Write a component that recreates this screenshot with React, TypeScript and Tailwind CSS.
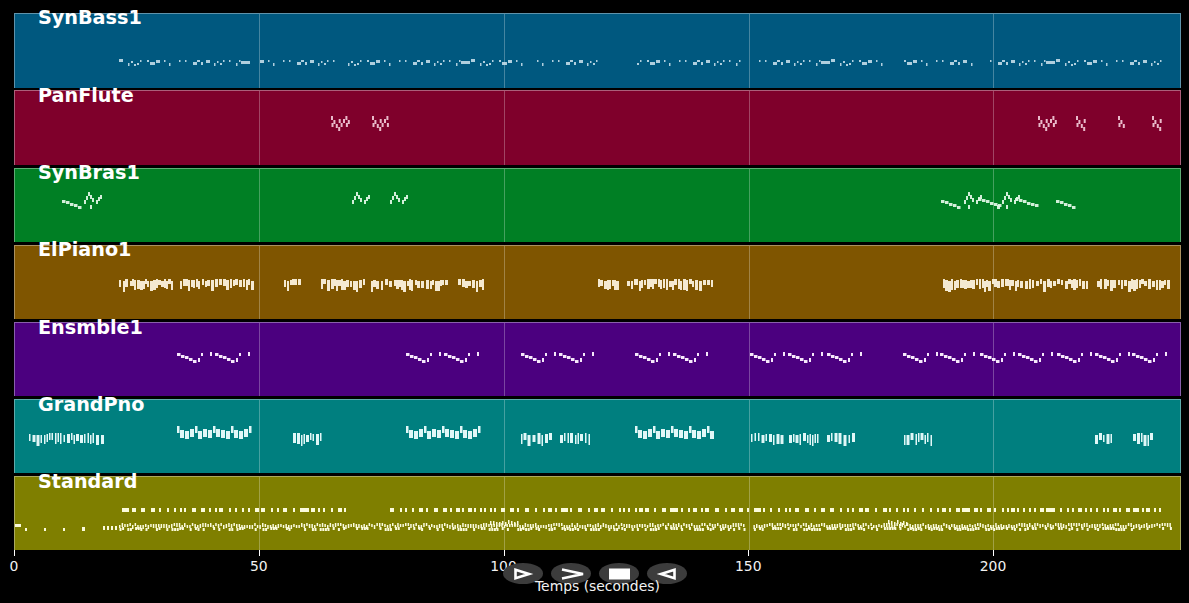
import React from "react";

type R = [number, number, number, number];

function rng(seed: number) {
  let s = seed;
  return () => {
    s = (s * 1664525 + 1013904223) >>> 0;
    return ((s >>> 8) & 0xffff) / 0xffff;
  };
}

const PANEL_TOPS = [13, 90, 168, 245, 322, 399, 476];

const BASS_MOTIF: R[] = [
  [0, 59, 4, 3], [9, 63, 1.5, 3], [12, 61, 2, 2], [15, 64, 2, 2], [18, 63, 2, 2], [21, 60, 1.5, 2],
  [28, 60, 2, 2], [31, 62, 5, 3], [37, 60, 4, 3], [45, 60, 1.5, 2], [50, 63, 1.5, 3], [60, 60, 1.5, 2],
  [66, 60, 1.5, 2], [74, 62, 4, 3], [78, 60, 3, 2], [82, 62, 2, 3], [87, 60, 4, 3], [95, 63, 1.5, 3],
  [98, 61, 1.5, 2], [101, 63, 2, 2], [104, 60, 1.5, 2], [110, 60, 1.5, 2], [117, 63, 1.5, 3], [120, 60, 1.5, 2],
  [122, 61, 5, 3], [127, 61, 4, 3],
];

function synBass(): R[] {
  const out: R[] = [];
  const segs = [[119, 250], [260, 335], [347, 527], [537, 598], [635, 745], [752, 890], [900, 975], [985, 1166]];
  segs.forEach(([a, b], si) => {
    const phase = (si * 37) % 66;
    let base = a - phase;
    while (base < b) {
      for (const m of BASS_MOTIF) {
        const x = base + m[0];
        if (x >= a && x + m[2] <= b) out.push([x, m[1], m[2], m[3]]);
      }
      base += 132;
    }
  });
  return out;
}

function panFlute(): R[] {
  const out: R[] = [];
  const segs = [[331, 349], [372, 387], [1038, 1056], [1076, 1084], [1118, 1123], [1152, 1161]];
  const wave = [0, 4, 8, 11, 7, 3];
  for (const [a, b] of segs) {
    let i = 0;
    for (let x = a; x < b; x += 2.4) {
      const y = 116 + wave[i % 6];
      out.push([x, y, 2, 4]);
      if (i % 3 === 0) out.push([x + 0.5, y > 122 ? y - 8 : y + 7, 2, 4]);
      i++;
    }
  }
  return out;
}

function run(x0: number, y0: number, len: number, h = 3, step = 4): R[] {
  const out: R[] = [];
  const n = Math.round(len / step);
  const slope = 7 / n;
  for (let i = 0; i < n; i++) out.push([x0 + i * step, Math.round(y0 + i * slope), step - 0.5, h]);
  return out;
}

function scatter(x0: number): R[] {
  const pts = [[0, 200], [2, 196], [4, 192], [6, 195], [8, 198], [12, 200], [14, 197], [16, 195]];
  return pts.map(([d, y]) => [x0 + d, y, 2, 4] as R);
}

function synBras(): R[] {
  const out: R[] = [];
  [62, 941, 1056].forEach((x) => out.push(...run(x, 200, 20)));
  [978, 1015].forEach((x) => out.push(...run(x, 198, 22)));
  [84, 352, 390, 964, 1002].forEach((x) => out.push(...scatter(x)));
  out.push([90, 205, 2, 4], [968, 205, 2, 4], [997, 205, 3, 4], [1006, 205, 2, 4]);
  return out;
}

function elPiano(): R[] {
  const r = rng(23);
  const out: R[] = [];
  const segs = [[119, 172], [180, 253], [284, 302], [321, 365], [371, 449], [458, 484], [598, 619], [627, 712], [943, 1087], [1097, 1170]];
  for (const [a, b] of segs) {
    let x = a;
    while (x < b) {
      const w = r() < 0.45 ? 3 : 2;
      out.push([x, 279 + Math.floor(r() * 3), w, 5 + Math.floor(r() * 7)]);
      x += w + Math.floor(r() * 2.2);
    }
  }
  return out;
}

function ensmble(): R[] {
  const out: R[] = [];
  [177, 215, 406, 444, 521, 559, 635, 673, 750, 788, 827, 903, 940, 980, 1018, 1057, 1095, 1132].forEach((x) => {
    for (let i = 0; i < 5; i++) out.push([x + i * 4, Math.round(353 + i * 1.7), 3.5, 3]);
    out.push([x + 21, 358, 2, 4], [x + 24, 353, 2, 3], [x + 33, 352, 2, 4]);
  });
  return out;
}

function grandPno(): R[] {
  const r = rng(31);
  const out: R[] = [];
  for (const [a, b] of [[177, 252], [406, 481], [635, 711]]) {
    let x = a;
    let i = 0;
    while (x < b) {
      const first = i % 4 === 0;
      out.push([x, first ? 426 : 429 + (i % 3), first ? 2.5 : 4, first ? 7 : 8]);
      x += first ? 3 : 5;
      i++;
    }
  }
  const segs = [[29, 102], [293, 322], [521, 552], [560, 590], [751, 782], [789, 819], [827, 856], [904, 934], [1095, 1113], [1133, 1151]];
  for (const [a, b] of segs) {
    let x = a;
    while (x < b) {
      const w = r() < 0.45 ? 3 : 1.5;
      const h = 7 + Math.floor(r() * 5);
      out.push([x, 433 + Math.floor(r() * 3), w, h]);
      x += w + 1 + Math.floor(r() * 1.6);
    }
  }
  return out;
}

function standard(): R[] {
  const r = rng(47);
  const out: R[] = [];
  let x = 122;
  while (x < 1165) {
    const big = r() < 0.12;
    const w = big ? 4 + Math.floor(r() * 6) : r() < 0.4 ? 4 : 2;
    if (!(x > 350 && x < 388)) out.push([x, 508, w, 4]);
    x += w + 2 + Math.floor(r() * 5);
  }
  out.push([15, 524, 6, 3], [25, 528, 2, 3], [44, 528, 2, 3], [63, 528, 2, 3], [82, 527, 3, 4]);
  for (let i = 103; i < 119; i += 4) out.push([i, 526, 2, 4]);
  for (let i = 119; i < 1170; i += 2.6) {
    if (i > 745 && i < 751) continue;
    out.push([i, 523 + Math.floor(r() * 3), 1.5, 3 + Math.floor(r() * 2)]);
    if (r() < 0.6) out.push([i + 0.5, 527 + Math.floor(r() * 2), 2, 3]);
  }
  for (let i = 490; i < 520; i += 3) out.push([i, 520 + Math.floor(r() * 3), 1.5, 4]);
  for (let i = 888; i < 908; i += 3) out.push([i, 520 + Math.floor(r() * 3), 1.5, 4]);
  return out;
}

const tracks = [
  { name: "SynBass1", bg: "bg-[#00587f]", border: "border-[#5f93ab]", fill: "#cfe4ee", notes: synBass(), op: 0.85, h: "h-[75px] -mb-[1px]", lab: "-top-[7px]" },
  { name: "PanFlute", bg: "bg-[#7f002b]", border: "border-[#ab5f7a]", fill: "#fbdbe6", notes: panFlute(), op: 0.85, h: "h-[75px]", lab: "-top-[6px]" },
  { name: "SynBras1", bg: "bg-[#007f24]", border: "border-[#5fab74]", fill: "#ddf6e4", notes: synBras(), op: 0.95, h: "h-[74px]", lab: "-top-[7px]" },
  { name: "ElPiano1", bg: "bg-[#7f5500]", border: "border-[#ab915f]", fill: "#fbf1dc", notes: elPiano(), op: 0.95, h: "h-[74px]", lab: "-top-[7px]" },
  { name: "Ensmble1", bg: "bg-[#4b007f]", border: "border-[#895fab]", fill: "#f6e8fb", notes: ensmble(), op: 1, h: "h-[74px]", lab: "-top-[6px]" },
  { name: "GrandPno", bg: "bg-[#007f7f]", border: "border-[#5fabab]", fill: "#e0f7f7", notes: grandPno(), op: 1, h: "h-[74px]", lab: "-top-[6px]" },
  { name: "Standard", bg: "bg-[#7f7f00]", border: "border-[#abab5f]", fill: "#fbfbdc", notes: standard(), op: 1, h: "h-[74px]", lab: "-top-[6px]" },
];

const GRID = [245, 490, 735, 979];

function Track({ t, top }: { t: (typeof tracks)[number]; top: number }) {
  return (
    <div className={`relative border-t border-l border-r ${t.h} ${t.bg} ${t.border}`}>
      <svg className="block h-full w-full">
        {GRID.map((g) => (
          <rect key={g} x={g - 1} y={0} width={1} height={76} fill="#ffffff" fillOpacity={0.27} />
        ))}
        {t.notes.map((n, i) => (
          <rect key={i} x={n[0] - 15} y={n[1] - top - 1} width={n[2]} height={n[3]} fill={t.fill} fillOpacity={t.op} />
        ))}
      </svg>
      <span className={`absolute left-[23px] ${t.lab} text-[19.2px] leading-[22px] font-bold text-white`}>
        {t.name}
      </span>
    </div>
  );
}

function Btn({ children }: { children: React.ReactNode }) {
  return (
    <div className="flex h-[21px] w-[40px] items-center justify-center rounded-[50%] bg-[#3c3c3c]">
      <svg width="30" height="16" viewBox="0 0 30 16" className="shrink-0">
        {children}
      </svg>
    </div>
  );
}

export default function App() {
  return (
    <div className="relative h-[603px] w-full overflow-hidden bg-black font-['DejaVu_Sans',sans-serif] text-white">
      <div className="flex flex-col gap-[3px] pl-[14px] pr-[8px] pt-[13px]">
        {tracks.map((t, i) => (
          <Track key={t.name} t={t} top={PANEL_TOPS[i]} />
        ))}
      </div>
      <div className="flex pl-[14px]">
        {[0, 50, 100, 150, 200].map((v) => (
          <div key={v} className="flex w-[244.75px] shrink-0 flex-col items-start">
            <div className="h-[6px] w-px bg-white" />
            <span className="mt-[3px] -translate-x-1/2 text-[13.9px] leading-[15px] text-[#f2f2f2]">{v}</span>
          </div>
        ))}
      </div>
      <div className="absolute left-[503px] top-[563px] flex gap-[8px]">
        <Btn>
          <path d="M7.5 3.8 L21 8 L7.5 12.2 Z" fill="none" stroke="#fff" strokeWidth="2.6" />
        </Btn>
        <Btn>
          <path d="M6 3.6 L27 8 L6 12.4" fill="none" stroke="#fff" strokeWidth="2.6" />
        </Btn>
        <Btn>
          <rect x="5" y="2.5" width="21" height="11" fill="#fff" />
        </Btn>
        <Btn>
          <path d="M22.5 3.8 L9 8 L22.5 12.2 Z" fill="none" stroke="#fff" strokeWidth="2.6" />
        </Btn>
      </div>
      <div className="absolute left-[535px] top-[579px] text-[13.9px] leading-[15px] whitespace-nowrap text-[#f2f2f2]">
        Temps (secondes)
      </div>
    </div>
  );
}
